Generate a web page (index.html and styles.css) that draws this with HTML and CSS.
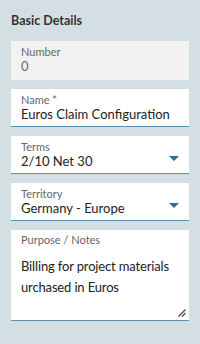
FILE: index.html
```html
<!DOCTYPE html>
<html lang="en">
<head>
    <meta charset="UTF-8">
    <title>Basic Details</title>
    <link rel="stylesheet" href="styles.css">
</head>
<body>
    <div class="panel">
        <h2>Basic Details</h2>

        <div class="field readonly">
            <label>Number</label>
            <div class="value">0</div>
        </div>

        <div class="field">
            <label>Name *</label>
            <div class="value">Euros Claim Configuration</div>
        </div>

        <div class="field select">
            <label>Terms</label>
            <div class="value">2/10 Net 30</div>
            <span class="arrow"></span>
        </div>

        <div class="field select">
            <label>Territory</label>
            <div class="value">Germany - Europe</div>
            <span class="arrow"></span>
        </div>

        <div class="field notes">
            <label>Purpose / Notes</label>
            <div class="value">Billing for project materials urchased in Euros</div>
            <!-- textarea resize grip -->
            <svg class="grip" width="8" height="8" viewBox="0 0 8 8">
                <path d="M0.5 7.5 L7.5 0.5 M4 7.5 L7.5 4" stroke="#444" stroke-width="1.2" fill="none"/>
            </svg>
        </div>
    </div>
</body>
</html>
```

FILE: styles.css
```css
body {
    margin: 0;
    background-color: #d3dfe3;
    font-family: Lato, "Open Sans", sans-serif;
}

.panel {
    padding: 11px 11px;
    display: flex;
    flex-direction: column;
    gap: 9px;
}

.panel h2 {
    margin: 2px 0 4px;
    font-size: 12.5px;
    font-weight: bold;
    color: #333;
}

.field {
    position: relative;
    background-color: #fff;
    height: 38px;
    padding: 4px 10px 0;
    box-sizing: border-box;
    border-bottom: 1px solid #5b8fad;
}

.field label {
    display: block;
    font-size: 11px;
    line-height: 13px;
    color: #666;
}

.field .value {
    font-size: 13px;
    line-height: 16px;
    color: #222;
}

.field.readonly {
    background-color: #f2f2f2;
    border-bottom: none;
    height: 39px;
}

.field.readonly .value {
    color: #666;
}

.arrow {
    position: absolute;
    right: 10px;
    top: 20px;
    width: 0;
    height: 0;
    border-left: 5px solid transparent;
    border-right: 5px solid transparent;
    border-top: 5px solid #2c6e96;
}

.field.notes {
    height: 91px;
    padding-top: 3px;
}

.field.notes .value {
    margin-top: 10px;
    font-size: 13px;
    letter-spacing: -0.15px;
    line-height: 21px;
}

.grip {
    position: absolute;
    right: 3px;
    bottom: 3px;
}
```
